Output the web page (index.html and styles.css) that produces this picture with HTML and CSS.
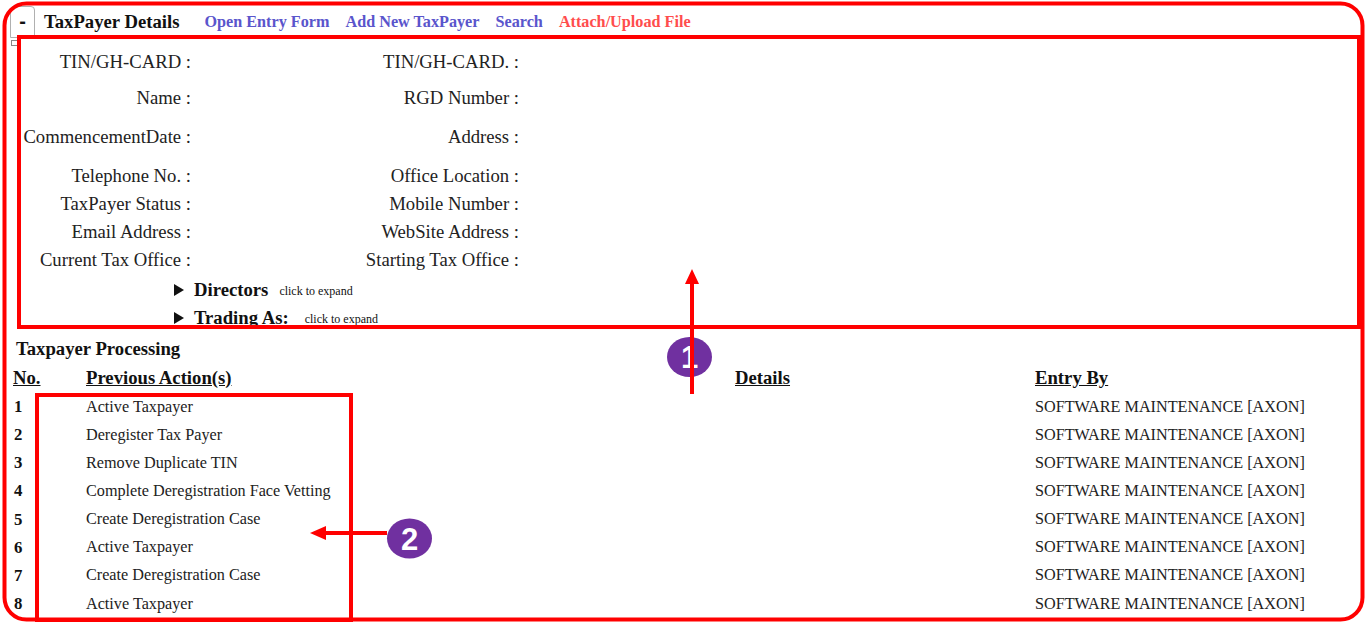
FILE: index.html
```html
<!DOCTYPE html>
<html>
<head>
<meta charset="utf-8">
<link rel="stylesheet" href="styles.css">
</head>
<body>
<div class="page">
  <div class="header">
    <span class="toggle">-</span>
    <span class="title">TaxPayer Details</span>
    <nav class="links">
      <a class="link">Open Entry Form</a>
      <a class="link">Add New TaxPayer</a>
      <a class="link">Search</a>
      <a class="link link-red">Attach/Upload File</a>
    </nav>
  </div>
  <span class="tiny-box"></span>
  <div class="details">
    <div class="drow h36"><span class="lab1">TIN/GH-CARD :</span><span class="lab2">TIN/GH-CARD. :</span></div>
    <div class="drow h39"><span class="lab1">Name :</span><span class="lab2">RGD Number :</span></div>
    <div class="drow h39"><span class="lab1">CommencementDate :</span><span class="lab2">Address :</span></div>
    <div class="drow h28"><span class="lab1">Telephone No. :</span><span class="lab2">Office Location :</span></div>
    <div class="drow h28"><span class="lab1">TaxPayer Status :</span><span class="lab2">Mobile Number :</span></div>
    <div class="drow h28"><span class="lab1">Email Address :</span><span class="lab2">WebSite Address :</span></div>
    <div class="drow h30"><span class="lab1">Current Tax Office :</span><span class="lab2">Starting Tax Office :</span></div>
    <div class="xrow h28"><span class="tri"></span><b class="xtitle">Directors</b><span class="xhint">click to expand</span></div>
    <div class="xrow h28"><span class="tri"></span><b class="xtitle xtitle-wide">Trading As:</b><span class="xhint">click to expand</span></div>
  </div>
  <div class="proc-title">Taxpayer Processing</div>
  <div class="ptable">
    <div class="prow phead"><span class="c-no">No.</span><span class="c-act">Previous Action(s)</span><span class="c-det">Details</span><span class="c-by">Entry By</span></div>
    <div class="prow"><span class="c-no">1</span><span class="c-act">Active Taxpayer</span><span class="c-det"></span><span class="c-by">SOFTWARE MAINTENANCE [AXON]</span></div>
    <div class="prow"><span class="c-no">2</span><span class="c-act">Deregister Tax Payer</span><span class="c-det"></span><span class="c-by">SOFTWARE MAINTENANCE [AXON]</span></div>
    <div class="prow"><span class="c-no">3</span><span class="c-act">Remove Duplicate TIN</span><span class="c-det"></span><span class="c-by">SOFTWARE MAINTENANCE [AXON]</span></div>
    <div class="prow"><span class="c-no">4</span><span class="c-act">Complete Deregistration Face Vetting</span><span class="c-det"></span><span class="c-by">SOFTWARE MAINTENANCE [AXON]</span></div>
    <div class="prow"><span class="c-no">5</span><span class="c-act">Create Deregistration Case</span><span class="c-det"></span><span class="c-by">SOFTWARE MAINTENANCE [AXON]</span></div>
    <div class="prow"><span class="c-no">6</span><span class="c-act">Active Taxpayer</span><span class="c-det"></span><span class="c-by">SOFTWARE MAINTENANCE [AXON]</span></div>
    <div class="prow"><span class="c-no">7</span><span class="c-act">Create Deregistration Case</span><span class="c-det"></span><span class="c-by">SOFTWARE MAINTENANCE [AXON]</span></div>
    <div class="prow"><span class="c-no">8</span><span class="c-act">Active Taxpayer</span><span class="c-det"></span><span class="c-by">SOFTWARE MAINTENANCE [AXON]</span></div>
  </div>

  <svg class="annot" width="1369" height="624" viewBox="0 0 1369 624">
    <rect x="4.5" y="3.5" width="1358" height="616" rx="22" ry="22" fill="none" stroke="#ff0000" stroke-width="4"/>
    <rect x="19" y="37" width="1340" height="290" fill="none" stroke="#ff0000" stroke-width="4"/>
    <rect x="37" y="395" width="314" height="225" fill="none" stroke="#ff0000" stroke-width="4"/>
    <ellipse cx="689.5" cy="357" rx="22.5" ry="20" fill="#7030a0"/>
    <text x="689.5" y="368" class="num">1</text>
    <line x1="692" y1="394" x2="692" y2="282" stroke="#ff0000" stroke-width="4"/>
    <polygon points="692,269 685,284 699,284" fill="#ff0000"/>
    <ellipse cx="409.5" cy="538.5" rx="22.5" ry="20" fill="#7030a0"/>
    <text x="409.5" y="550" class="num">2</text>
    <line x1="387" y1="533" x2="322" y2="533" stroke="#ff0000" stroke-width="4"/>
    <polygon points="310,533 326,526 326,540" fill="#ff0000"/>
  </svg>
</div>
</body>
</html>
```
FILE: styles.css
```css
html, body {
  margin: 0;
  padding: 0;
  background: #ffffff;
}
body {
  font-family: "Liberation Serif", "Times New Roman", serif;
  color: #222222;
}
.page {
  position: relative;
  width: 1369px;
  height: 624px;
  overflow: hidden;
}
.header {
  display: flex;
  align-items: center;
  height: 32px;
  padding: 6px 0 0 10px;
}
.toggle {
  box-sizing: border-box;
  width: 25px;
  height: 32px;
  border: 1px solid #b0b0b0;
  border-radius: 4px 4px 0 0;
  display: flex;
  justify-content: center;
  padding-top: 4px;
  font-family: "Liberation Sans", Arial, sans-serif;
  font-weight: bold;
  font-size: 20px;
  color: #111;
  line-height: 20px;
}
.title {
  margin-left: 9px;
  font-weight: bold;
  font-size: 18.7px;
  color: #111;
}
.links {
  display: flex;
  gap: 16px;
  margin-left: 25px;
}
.link {
  font-weight: bold;
  font-size: 16.2px;
  color: #5a55cc;
}
.link-red {
  color: #ff4d4d;
}
.tiny-box {
  position: absolute;
  left: 11px;
  top: 40px;
  width: 5px;
  height: 4px;
  border: 1px solid #888;
  background: #fff;
}
.details {
  margin-top: 13px;
  padding-left: 20px;
}
.drow {
  display: grid;
  grid-template-columns: 171px 328px;
  align-items: start;
  font-size: 18.7px;
  line-height: 22px;
}
.lab1, .lab2 {
  text-align: right;
  white-space: nowrap;
}
.h28 { height: 28px; }
.h30 { height: 30px; }
.h36 { height: 36px; }
.h39 { height: 39px; }
.xrow {
  display: flex;
  align-items: center;
  padding-left: 154px;
  height: 22px;
  color: #111;
}
.xrow.h28 { height: 22px; margin-bottom: 6px; }
.tri {
  width: 0;
  height: 0;
  border-left: 10px solid #111;
  border-top: 6px solid transparent;
  border-bottom: 6px solid transparent;
  margin-right: 10px;
}
.xtitle {
  font-size: 18.7px;
}
.xhint {
  font-size: 12px;
  margin-left: 11px;
  padding-top: 3px;
}
.xtitle-wide + .xhint {
  margin-left: 16px;
}
.proc-title {
  margin-top: 1px;
  padding-left: 16px;
  font-weight: bold;
  font-size: 18.7px;
  color: #111;
  height: 28px;
  line-height: 28px;
}
.ptable {
  padding-left: 13px;
}
.prow {
  display: grid;
  grid-template-columns: 72px 650px 300px 1fr;
  align-items: center;
  height: 28.15px;
  font-size: 16.2px;
}
.phead {
  font-weight: bold;
  font-size: 18.7px;
  text-decoration: underline;
  color: #111;
  height: 30px;
}
.c-no {
  font-weight: bold;
  font-size: 16.8px;
  color: #111;
  padding-left: 1px;
}
.phead .c-no {
  font-size: 18.7px;
  padding-left: 0;
}
.prow .c-act {
  padding-left: 1px;
}
.prow .c-by {
  font-size: 16.2px;
}
.phead .c-by,
.phead .c-act,
.phead .c-det {
  font-size: 18.7px;
}
.annot {
  position: absolute;
  left: 0;
  top: 0;
  pointer-events: none;
}
.num {
  font-family: "Liberation Sans", Arial, sans-serif;
  font-size: 31px;
  font-weight: bold;
  fill: #ffffff;
  text-anchor: middle;
}
```
